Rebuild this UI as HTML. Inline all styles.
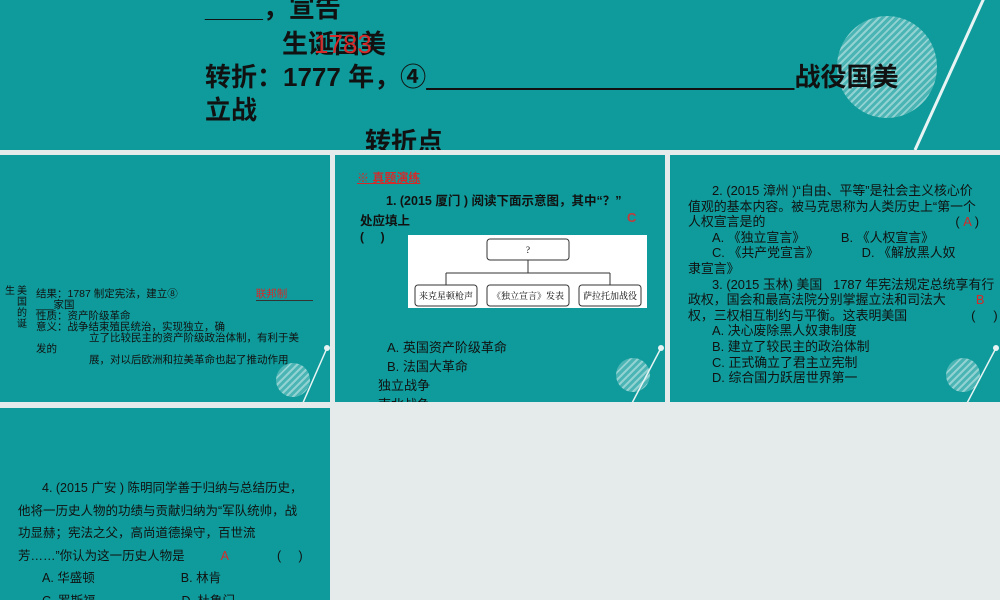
<!DOCTYPE html>
<html><head><meta charset="utf-8"><style>
body{margin:0;width:1000px;height:600px;background:#e5ebeb;position:relative;overflow:hidden;font-family:"Liberation Sans","Noto Sans CJK SC",sans-serif;color:#111}
.s{position:absolute;background:#0f9b9b;overflow:hidden}
.t{position:absolute;white-space:nowrap}
.r{color:#d42a2a}
.b{font-weight:bold}
.circ{position:absolute;border-radius:50%;background:repeating-linear-gradient(135deg,rgba(255,255,255,.55) 0 2px,rgba(255,255,255,.25) 2px 5px)}
.l2 div{height:11px;line-height:11px}
</style></head><body>
<div class="s" style="left:0;top:0;width:1000px;height:150px">
 <div class="circ" style="left:837px;top:16px;width:100px;height:102px"></div>
 <svg style="position:absolute;left:0;top:0" width="1000" height="150"><line x1="984" y1="-2" x2="915" y2="150" stroke="#e8f4f4" stroke-width="3"/></svg>
 <div class="t b" style="left:205px;top:-12px;font-size:26px">____，宣告</div>
 <div class="t b" style="left:282px;top:24px;font-size:26px">生诞国美<span class="r" style="margin-left:-72px;font-weight:normal">1783</span></div>
 <div class="t b" style="left:205px;top:57px;font-size:26px">转折：1777 年，④<span style="text-decoration:underline">&nbsp;&nbsp;&nbsp;&nbsp;&nbsp;&nbsp;&nbsp;&nbsp;&nbsp;&nbsp;&nbsp;&nbsp;&nbsp;&nbsp;&nbsp;&nbsp;&nbsp;&nbsp;&nbsp;&nbsp;&nbsp;&nbsp;&nbsp;&nbsp;&nbsp;&nbsp;&nbsp;&nbsp;&nbsp;&nbsp;&nbsp;&nbsp;&nbsp;&nbsp;&nbsp;&nbsp;&nbsp;&nbsp;&nbsp;&nbsp;&nbsp;&nbsp;&nbsp;&nbsp;&nbsp;&nbsp;&nbsp;&nbsp;&nbsp;&nbsp;&nbsp;</span>战役国美</div>
 <div class="t b" style="left:205px;top:90px;font-size:26px">立战</div>
 <div class="t b" style="left:365px;top:122px;font-size:26px">转折点</div>
</div>

<div class="s" style="left:0;top:155px;width:330px;height:247px">
 <div class="circ" style="left:276px;top:208px;width:34px;height:34px"></div>
 <svg style="position:absolute;left:0;top:0" width="330" height="247"><circle cx="327" cy="193" r="3" fill="#e8f4f4"/><line x1="327" y1="193" x2="302" y2="250" stroke="#e8f4f4" stroke-width="1.5"/></svg>
 <div class="t" style="left:5px;top:131px;font-size:10px;line-height:11px">生</div>
 <div class="t" style="left:17px;top:131px;font-size:10px;line-height:11px;width:10px;white-space:normal">美国的诞</div>
 <div class="t l2" style="left:36px;top:134px;font-size:10.5px">
  <div>结果：1787 制定宪法，建立⑧<span class="r" style="margin-left:78px;border-bottom:1px solid #333;padding-right:26px">联邦制</span></div>
  <div>___家国</div><div>性质：资产阶级革命</div><div>意义：战争结束殖民统治，实现独立，确</div>
  <div style="padding-left:53px">立了比较民主的资产阶级政治体制，有利于美</div><div>发的</div>
  <div style="padding-left:53px">展，对以后欧洲和拉美革命也起了推动作用</div></div>
</div>

<div class="s" style="left:335px;top:155px;width:330px;height:247px">
 <div class="circ" style="left:281px;top:203px;width:34px;height:34px"></div>
 <svg style="position:absolute;left:0;top:0" width="330" height="247"><circle cx="326" cy="193" r="3" fill="#e8f4f4"/><line x1="326" y1="193" x2="296" y2="250" stroke="#e8f4f4" stroke-width="1.5"/></svg>
 <div class="t b r" style="left:22px;top:14px;font-size:12px;text-decoration:underline">※ 真题演练</div>
 <div class="t b" style="left:51px;top:35px;font-size:12.5px">1. (2015 厦门 ) 阅读下面示意图，其中“？”</div>
 <div class="t b" style="left:25px;top:55px;font-size:12.5px">处应填上</div>
 <div class="t b" style="left:292px;top:55px;font-size:13px;color:#c43a3a">C</div>
 <div class="t b" style="left:25px;top:75px;font-size:12px">(&nbsp;&nbsp;&nbsp;&nbsp;&nbsp;)</div>
 <div style="position:absolute;left:73px;top:80px;width:239px;height:73px;background:#fff">
  <svg width="239" height="73" font-family="Liberation Serif,Noto Serif CJK SC,serif" font-size="9"><rect x="79" y="4" width="82" height="21" rx="3" fill="none" stroke="#333"/><text x="120" y="18" text-anchor="middle">?</text><path d="M120 25V38M38 38H202M38 38V50M202 38V50" stroke="#333" fill="none"/><rect x="7" y="50" width="62" height="21" rx="3" fill="none" stroke="#333"/><rect x="79" y="50" width="82" height="21" rx="3" fill="none" stroke="#333"/><rect x="171" y="50" width="62" height="21" rx="3" fill="none" stroke="#333"/><text x="38" y="64" text-anchor="middle">来克星顿枪声</text><text x="120" y="64" text-anchor="middle">《独立宣言》发表</text><text x="202" y="64" text-anchor="middle">萨拉托加战役</text></svg>
 </div>
 <div class="t" style="left:52px;top:183px;font-size:13px;line-height:19px">A. 英国资产阶级革命<br>B. 法国大革命</div>
 <div class="t" style="left:43px;top:221px;font-size:13px;line-height:19px">独立战争<br>南北战争</div>
</div>

<div class="s" style="left:670px;top:155px;width:330px;height:247px">
 <div class="circ" style="left:276px;top:203px;width:34px;height:34px"></div>
 <svg style="position:absolute;left:0;top:0" width="330" height="247"><circle cx="326" cy="193" r="3" fill="#e8f4f4"/><line x1="326" y1="193" x2="296" y2="250" stroke="#e8f4f4" stroke-width="1.5"/></svg>
 <div class="t" style="left:18px;top:28px;font-size:12.9px;line-height:15.6px">
 <span style="padding-left:24px">2. (2015 漳州 )“自由、平等”是社会主义核心价</span><br>值观的基本内容。被马克思称为人类历史上“第一个<br>人权宣言是的<span style="padding-left:190px">( <span class="r">A</span> )</span><br>
 <span style="padding-left:24px">A. 《独立宣言》&nbsp;&nbsp;&nbsp;&nbsp;&nbsp;&nbsp;&nbsp;&nbsp;&nbsp;&nbsp;B. 《人权宣言》</span><br>
 <span style="padding-left:24px">C. 《共产党宣言》&nbsp;&nbsp;&nbsp;&nbsp;&nbsp;&nbsp;&nbsp;&nbsp;&nbsp;&nbsp;&nbsp;&nbsp;D. 《解放黑人奴</span><br>隶宣言》<br>
 <span style="padding-left:24px">3. (2015 玉林) 美国 &nbsp;&nbsp;1787 年宪法规定总统享有行</span><br>政权，国会和最高法院分别掌握立法和司法大<span class="r" style="padding-left:30px">B</span><br>权，三权相互制约与平衡。这表明美国<span style="padding-left:64px">(&nbsp;&nbsp;&nbsp;&nbsp;&nbsp;)</span><br>
 <span style="padding-left:24px">A. 决心废除黑人奴隶制度</span><br><span style="padding-left:24px">B. 建立了较民主的政治体制</span><br><span style="padding-left:24px">C. 正式确立了君主立宪制</span><br><span style="padding-left:24px">D. 综合国力跃居世界第一</span></div>
</div>

<div class="s" style="left:0;top:408px;width:330px;height:192px">
 <div class="t" style="left:18px;top:69px;font-size:12.5px;line-height:22.5px">
 <span style="padding-left:24px">4. (2015 广安 ) 陈明同学善于归纳与总结历史，</span><br>他将一历史人物的功绩与贡献归纳为“军队统帅，战<br>功显赫；宪法之父，高尚道德操守，百世流<br>芳……”你认为这一历史人物是<span class="r" style="padding-left:36px">A</span><span style="padding-left:48px">(&nbsp;&nbsp;&nbsp;&nbsp;&nbsp;)</span><br>
 <span style="padding-left:24px">A. 华盛顿</span><span style="padding-left:86px">B. 林肯</span><br><span style="padding-left:24px">C. 罗斯福</span><span style="padding-left:86px">D. 杜鲁门</span></div>
</div>
</body></html>
